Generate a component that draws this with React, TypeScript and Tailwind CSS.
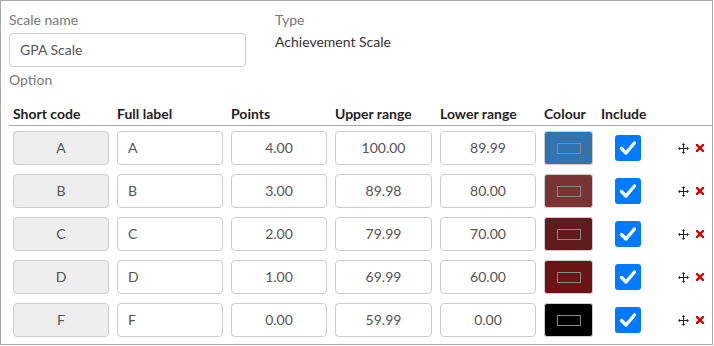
import React from "react";

const rows = [
  { code: "A", label: "A", points: "4.00", upper: "100.00", lower: "89.99", colour: "#3174b0" },
  { code: "B", label: "B", points: "3.00", upper: "89.98", lower: "80.00", colour: "#7a3333" },
  { code: "C", label: "C", points: "2.00", upper: "79.99", lower: "70.00", colour: "#611b1d" },
  { code: "D", label: "D", points: "1.00", upper: "69.99", lower: "60.00", colour: "#6b1415" },
  { code: "F", label: "F", points: "0.00", upper: "59.99", lower: "0.00", colour: "#000000" },
];

const cols = "grid grid-cols-[104px_114px_104px_105px_104px_57px_62px_1fr]";
const field =
  "h-[34px] rounded-[4px] border border-[#ccc] px-[10px] text-[14px] leading-[32px] text-[#555]";

function MoveIcon() {
  return (
    <svg width="11" height="11" viewBox="0 0 11 11" className="text-[#222]">
      <path d="M5.5 1.5v8M1.5 5.5h8" stroke="currentColor" strokeWidth="1.1" />
      <path d="M5.5 0L3.8 2.1h3.4zM5.5 11L3.8 8.9h3.4zM0 5.5l2.1-1.7v3.4zM11 5.5L8.9 3.8v3.4z" fill="currentColor" />
    </svg>
  );
}

function RemoveIcon() {
  return (
    <svg width="8" height="8" viewBox="0 0 8 8">
      <path d="M1 1l6 6M7 1L1 7" stroke="#d40000" strokeWidth="2.4" strokeLinecap="square" />
    </svg>
  );
}

function Check() {
  return (
    <div className="flex h-[26px] w-[26px] items-center justify-center rounded-[3px] bg-[#007bff]">
      <svg width="18" height="16" viewBox="0 0 18 16">
        <path d="M2.5 8.5l4.5 4.5L15.5 3" fill="none" stroke="#fff" strokeWidth="3.4" strokeLinecap="round" strokeLinejoin="round" />
      </svg>
    </div>
  );
}

export default function App() {
  return (
    <div className="h-[345px] w-[713px] border border-[#aaa] bg-white pl-2 pt-[9px] font-['Lato','Liberation_Sans',sans-serif] text-[14px]">
      <div className="flex">
        <div className="w-[266px]">
          <div className="leading-[20px] text-[#777]">Scale name</div>
          <div className={`${field} mt-[3px] w-[237px] text-[#333]`}>GPA Scale</div>
        </div>
        <div>
          <div className="leading-[20px] text-[#777]">Type</div>
          <div className="mt-[2px] leading-[20px] text-[#333]">Achievement Scale</div>
        </div>
      </div>
      <div className="mt-[3px] leading-[20px] text-[#777]">Option</div>

      <div className={`${cols} border-b border-[#aaa] pb-[1px] pt-[14px] font-bold leading-[20px] text-[#222]`}>
        <div className="px-1">Short code</div>
        <div className="px-1">Full label</div>
        <div className="px-1">Points</div>
        <div className="px-1">Upper range</div>
        <div className="px-1">Lower range</div>
        <div className="px-1">Colour</div>
        <div className="px-1">Include</div>
        <div />
      </div>

      {rows.map((r) => (
        <div key={r.code} className={`${cols} items-center pb-[4px] pt-[5px]`}>
          <div className="px-1">
            <div className={`${field} bg-[#eee] text-center`}>{r.code}</div>
          </div>
          <div className="px-1">
            <div className={field}>{r.label}</div>
          </div>
          <div className="px-1">
            <div className={`${field} text-center`}>{r.points}</div>
          </div>
          <div className="px-1">
            <div className={`${field} text-center`}>{r.upper}</div>
          </div>
          <div className="px-1">
            <div className={`${field} text-center`}>{r.lower}</div>
          </div>
          <div className="px-1">
            <div
              className="flex h-[34px] w-[49px] items-center justify-center rounded-[3px] border border-[#ccc]"
              style={{ backgroundColor: r.colour }}
            >
              <div className="h-[11px] w-[24px] border border-[#888]" />
            </div>
          </div>
          <div className="flex justify-center">
            <Check />
          </div>
          <div className="flex items-center gap-[7px] pl-[19px]">
            <MoveIcon />
            <RemoveIcon />
          </div>
        </div>
      ))}
    </div>
  );
}
